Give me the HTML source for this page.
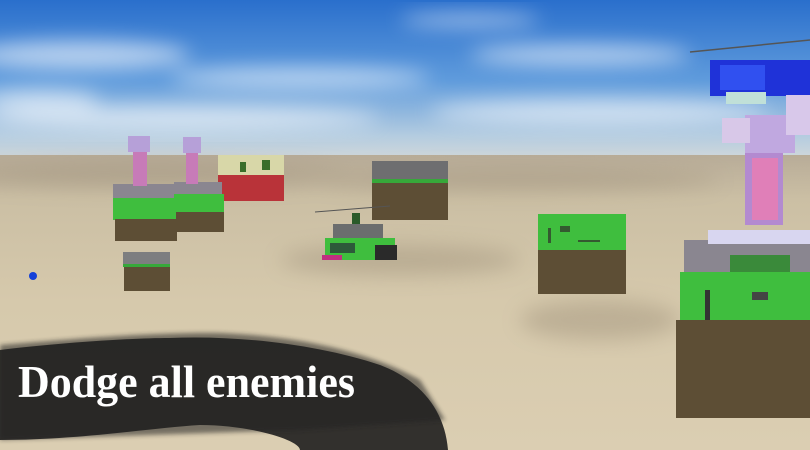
<!DOCTYPE html>
<html><head><style>html,body{margin:0;padding:0;width:810px;height:450px;overflow:hidden}</style></head>
<body>
<svg width="810" height="450" viewBox="0 0 810 450" xmlns="http://www.w3.org/2000/svg">
<defs>
<linearGradient id="sky" x1="0" y1="0" x2="0" y2="1">
<stop offset="0" stop-color="#2a6fcc"/><stop offset="0.5" stop-color="#5f9bdc"/><stop offset="0.85" stop-color="#b4cce0"/><stop offset="1" stop-color="#d2d8da"/></linearGradient>
<linearGradient id="gr" x1="0" y1="0" x2="0" y2="1">
<stop offset="0" stop-color="#b8ac98"/><stop offset="0.15" stop-color="#cbbfa4"/><stop offset="0.5" stop-color="#d6c9ac"/><stop offset="1" stop-color="#dbceb2"/></linearGradient>
<filter id="bl"><feGaussianBlur stdDeviation="10"/></filter>
<filter id="bl2"><feGaussianBlur stdDeviation="2"/></filter>
</defs>
<rect width="810" height="160" fill="url(#sky)"/>
<g fill="#fff" opacity="0.6" filter="url(#bl)">
<ellipse cx="80" cy="55" rx="110" ry="14"/><ellipse cx="300" cy="78" rx="130" ry="10"/><ellipse cx="580" cy="55" rx="110" ry="10"/><ellipse cx="180" cy="118" rx="200" ry="12"/><ellipse cx="600" cy="112" rx="170" ry="12"/><ellipse cx="470" cy="20" rx="70" ry="6"/><ellipse cx="40" cy="100" rx="60" ry="10"/>
</g>
<rect y="155" width="810" height="295" fill="url(#gr)"/>
<g fill="#8d7f6a" opacity="0.35" filter="url(#bl)">
<ellipse cx="150" cy="175" rx="200" ry="12"/><ellipse cx="520" cy="180" rx="200" ry="10"/><ellipse cx="400" cy="260" rx="120" ry="15"/><ellipse cx="600" cy="320" rx="80" ry="20"/>
</g>
<rect x="218" y="155" width="66" height="20" fill="#d8d7a8"/><rect x="218" y="175" width="66" height="26" fill="#b93339"/>
<rect x="240" y="162" width="6" height="10" fill="#3a6e2a"/><rect x="262" y="160" width="8" height="10" fill="#3a6e2a"/>
<rect x="372" y="161" width="76" height="20" fill="#6e6e70"/><rect x="372" y="179" width="76" height="4" fill="#37a83a"/><rect x="372" y="183" width="76" height="37" fill="#5d4e35"/>
<g>
<rect x="113" y="184" width="64" height="16" fill="#8a8690"/><rect x="113" y="198" width="64" height="22" fill="#3fbe3e"/><rect x="115" y="219" width="62" height="22" fill="#5d4e35"/>
<rect x="133" y="150" width="14" height="36" fill="#c77bb8"/><rect x="128" y="136" width="22" height="16" fill="#b6a0d8"/>
<rect x="174" y="182" width="48" height="14" fill="#8a8690"/><rect x="174" y="194" width="50" height="20" fill="#3fbe3e"/><rect x="176" y="212" width="48" height="20" fill="#5d4e35"/>
<rect x="186" y="150" width="12" height="34" fill="#c77bb8"/><rect x="183" y="137" width="18" height="16" fill="#b6a0d8"/>
</g>
<rect x="123" y="252" width="47" height="14" fill="#7d7e80"/><rect x="123" y="264" width="47" height="3" fill="#37a83a"/><rect x="124" y="267" width="46" height="24" fill="#5d4e35"/>
<circle cx="33" cy="276" r="4" fill="#1440d8"/>
<line x1="315" y1="212" x2="390" y2="206" stroke="#555" stroke-width="1"/>
<rect x="352" y="213" width="8" height="12" fill="#2a5a2a"/>
<rect x="333" y="224" width="50" height="24" fill="#6b6d6e"/><rect x="325" y="238" width="70" height="22" fill="#3fbe3e"/><rect x="375" y="245" width="22" height="15" fill="#2a2a2a"/><rect x="330" y="243" width="25" height="10" fill="#2d5a3a"/>
<rect x="322" y="255" width="20" height="5" fill="#c03080"/>
<rect x="538" y="214" width="88" height="38" fill="#3fbe3e"/><rect x="538" y="250" width="88" height="44" fill="#5d4e35"/>
<rect x="560" y="226" width="10" height="6" fill="#345a30"/><rect x="548" y="228" width="3" height="15" fill="#345a30"/><rect x="578" y="240" width="22" height="2" fill="#345a30"/>
<rect x="684" y="240" width="126" height="36" fill="#8a8690"/>
<rect x="708" y="230" width="102" height="14" fill="#d8d6f0"/>
<rect x="730" y="255" width="60" height="30" fill="#3a8a3a"/>
<rect x="680" y="272" width="130" height="50" fill="#3fbe3e"/>
<rect x="676" y="320" width="134" height="98" fill="#5d4e35"/>
<rect x="705" y="290" width="5" height="30" fill="#333"/><rect x="752" y="292" width="16" height="8" fill="#444"/>
<rect x="745" y="150" width="38" height="75" fill="#b38ad0"/><rect x="752" y="158" width="26" height="62" fill="#e07fb8"/>
<rect x="745" y="115" width="50" height="38" fill="#c0a8e0"/><rect x="722" y="118" width="28" height="25" fill="#d8c8e8"/>
<rect x="710" y="60" width="100" height="36" fill="#1f32d8"/><rect x="720" y="65" width="45" height="25" fill="#3050f0"/><rect x="726" y="92" width="40" height="12" fill="#c0e0d8"/>
<rect x="786" y="95" width="24" height="40" fill="#d8c8ea"/>
<line x1="690" y1="52" x2="810" y2="40" stroke="#555" stroke-width="1.5"/>
<g fill="#1a1a1a" opacity="0.88">
<path d="M0 350 C40 345 120 338 170 338 C240 335 320 345 380 365 C420 380 445 410 448 450 L300 450 C300 440 250 425 200 425 C150 428 80 440 0 440 Z"/>
</g>
<g fill="#222" opacity="0.55" filter="url(#bl2)">
<path d="M0 345 C60 340 150 332 220 333 C300 336 370 352 420 380 L445 420 L300 430 L0 440 Z"/>
</g>
<text x="18" y="397" font-family="Liberation Serif, serif" font-weight="bold" font-size="46" fill="#fff" textLength="337" lengthAdjust="spacingAndGlyphs">Dodge all enemies</text>
</svg>
</body></html>
